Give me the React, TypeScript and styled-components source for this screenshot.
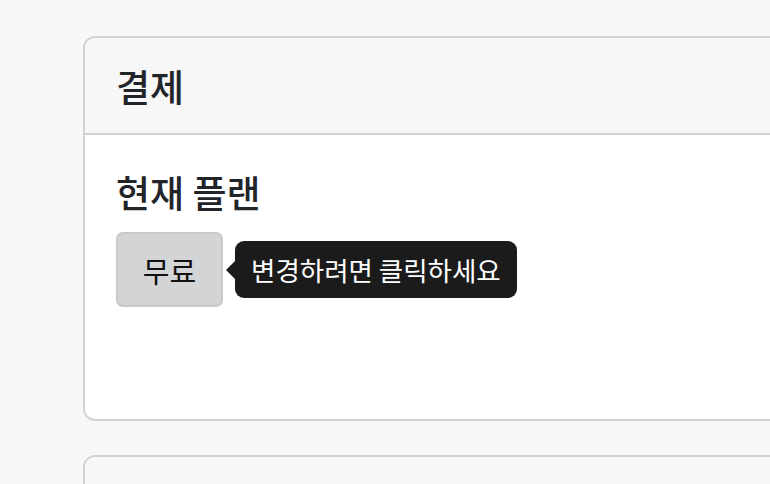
import React from "react";
import styled, { createGlobalStyle } from "styled-components";

const Global = createGlobalStyle`
  html, body {
    margin: 0;
    padding: 0;
    background: #f7f8fa;
    overflow: hidden;
    font-family: "Noto Sans CJK KR", "Noto Sans", sans-serif;
    color: #212529;
  }
`;

const Page = styled.div`
  padding: 36px 0 0 83px;
  width: 900px;
  display: flex;
  flex-direction: column;
  gap: 34px;
`;

const Card = styled.section`
  border: 2px solid #d3d3d3;
  border-radius: 12px;
  background: #fff;
  overflow: hidden;
  width: 820px;
`;

const CardHeader = styled.div`
  background: #f7f7f7;
  border-bottom: 2px solid #d3d3d3;
  height: 95px;
  padding: 0 31px;
  display: flex;
  align-items: center;
`;

const Title = styled.h3`
  margin: 0;
  font-size: 37px;
  font-weight: 500;
  line-height: 44px;
`;

const CardBody = styled.div`
  padding: 35px 31px 112px;
  display: flex;
  flex-direction: column;
  gap: 18px;
`;

const Row = styled.div`
  display: flex;
  align-items: center;
  gap: 3px;
`;

const PlanButton = styled.button`
  width: 107px;
  height: 75px;
  box-sizing: border-box;
  border: 2px solid #c8c9ca;
  border-radius: 7px;
  background: #d3d4d6;
  color: #111;
  font-family: inherit;
  font-size: 29px;
  padding: 0;
  cursor: pointer;
`;

const Tooltip = styled.div`
  position: relative;
  margin-left: 9px;
  height: 57px;
  padding: 0 16px;
  display: flex;
  align-items: center;
  background: #1b1b1b;
  color: #fff;
  border-radius: 9px;
  font-size: 26.5px;
  white-space: nowrap;

  &::before {
    content: "";
    position: absolute;
    left: -9px;
    top: 50%;
    transform: translateY(-50%);
    border-top: 10px solid transparent;
    border-bottom: 10px solid transparent;
    border-right: 10px solid #1b1b1b;
  }
`;

export default function App() {
  return (
    <>
      <Global />
      <Page>
        <Card>
          <CardHeader>
            <Title>결제</Title>
          </CardHeader>
          <CardBody>
            <Title>현재 플랜</Title>
            <Row>
              <PlanButton>무료</PlanButton>
              <Tooltip>변경하려면 클릭하세요</Tooltip>
            </Row>
          </CardBody>
        </Card>
        <Card>
          <CardHeader>
            <Title>&nbsp;</Title>
          </CardHeader>
        </Card>
      </Page>
    </>
  );
}
